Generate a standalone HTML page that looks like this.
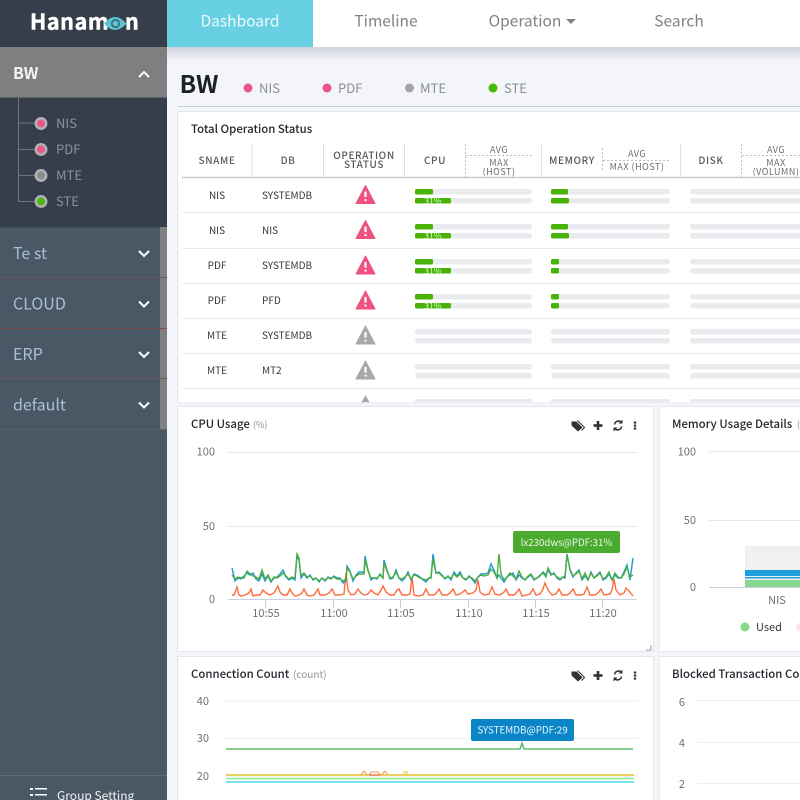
<!DOCTYPE html>
<html><head><meta charset="utf-8"><style>
html,body{margin:0;padding:0;width:800px;height:800px;overflow:hidden;background:#f3f5fa}
svg{display:block}
text{font-family:"Noto Sans CJK KR","Liberation Sans",sans-serif}
.n{font-size:15.500px;fill:#7d8287}
.leg{font-size:13px;fill:#8a8f95}
.sb{font-size:16px;fill:#a9c0d4}
.sub{font-size:13px;fill:#8d9298}
.h{font-size:10px;fill:#55595e;letter-spacing:.6px;text-anchor:middle;font-weight:500}
.hs{font-size:9px;fill:#6a6e73;letter-spacing:.5px;text-anchor:middle}
.c{font-size:10px;fill:#33373c;text-anchor:middle}
.l{font-size:10px;fill:#33373c}
.ct{font-size:11.400px;fill:#23282f;font-weight:500}
.u{font-size:9px;fill:#8f9398}
.ax{font-size:11px;fill:#6d6f72}
.m{text-anchor:middle}
.e{text-anchor:end}
</style></head><body>
<svg width="800" height="800" viewBox="0 0 800 800" xmlns="http://www.w3.org/2000/svg">
<defs>
<linearGradient id="sh" x1="0" y1="0" x2="0" y2="1"><stop offset="0" stop-color="#cfd3da"/><stop offset="1" stop-color="#f3f5fa"/></linearGradient>
<g id="w"><path d="M0-9.500 L9.500 8.500 H-9.500Z" stroke-width="1" stroke-linejoin="round"/><rect x="-1.600" y="-4" width="3.200" height="6.600" fill="#fff"/><rect x="-1.600" y="3.700" width="3.200" height="2.800" fill="#fff"/></g>
<g id="icons" fill="#333">
<path d="M-63.500-4 h5 l6 6 -4.500 4 -6.500-6Z"/><path d="M-57.500-5 l7 7 -3 3" fill="none" stroke="#333" stroke-width="1"/>
<rect x="-41.500" y="-1.300" width="9" height="2.600"/><rect x="-38.300" y="-4.500" width="2.600" height="9"/>
<path d="M-20.500-1 a4 4 0 0 1 7-2 M-13.500 1 a4 4 0 0 1-7 2" fill="none" stroke="#333" stroke-width="1.500"/><path d="M-12.500-6 v4 h-4Z M-21.500 6 v-4 h4Z"/>
<rect x="-1.200" y="-4" width="2.400" height="2.100"/><rect x="-1.200" y="-1" width="2.400" height="2.100"/><rect x="-1.200" y="2" width="2.400" height="2.100"/>
</g>
</defs>

<rect x="167" y="47" width="633" height="14" fill="url(#sh)"/>
<rect x="167" y="0" width="633" height="47" fill="#fff"/>
<rect x="167" y="0" width="146" height="47" fill="#67d0e3"/>
<text x="240" y="26.500" text-anchor="middle" style="font-size:15.500px;fill:#eef9fb">Dashboard</text>
<text x="386" y="26.500" text-anchor="middle" class="n">Timeline</text>
<text x="525" y="26.500" text-anchor="middle" class="n">Operation</text>
<path d="M566 19 h10 l-5 5Z" fill="#7d8287"/>
<text x="679" y="26.500" text-anchor="middle" class="n">Search</text>

<!-- sidebar -->
<rect x="0" y="0" width="167" height="800" fill="#4a5764"/>
<rect x="0" y="0" width="167" height="47" fill="#353e4a"/>
<text x="30" y="29.500" style="font-size:21.500px;font-weight:700;fill:#fff;stroke:#fff;stroke-width:.5px;letter-spacing:.6px">Hanam</text>
<path d="M104 23.500 Q115 10.500 126.500 23.500 Q115 36.500 104 23.500Z" fill="#5cc3d3"/>
<circle cx="115.500" cy="23.500" r="4.600" fill="#3f6f7e"/><circle cx="115.500" cy="23.500" r="2.800" fill="#5cc3d3"/>
<text x="125" y="29.500" style="font-size:21.500px;font-weight:700;fill:#fff;stroke:#fff;stroke-width:.5px">n</text>
<rect x="0" y="47" width="167" height="50.500" fill="#7f7f7f"/>
<text x="13" y="79" style="font-size:16px;font-weight:700;fill:#f4f4f4">BW</text>
<path d="M139 77 l5-5 5 5" fill="none" stroke="#fff" stroke-width="2"/>
<rect x="0" y="97.500" width="167" height="130" fill="#353e4a"/>
<path d="M18.500 97 V201.500 H35 M18.500 123 H35 M18.500 149.500 H35 M18.500 175.500 H35" fill="none" stroke="#6d7480"/>
<g stroke="#b0b3b6" stroke-width="2.500">
<circle cx="41" cy="123.500" r="5.200" fill="#f0558a"/>
<circle cx="41" cy="149.500" r="5.200" fill="#f0558a"/>
<circle cx="41" cy="175.500" r="5.200" fill="#8c8c8c"/>
<circle cx="41" cy="201.500" r="5.200" fill="#48bb0a"/>
</g>
<text x="56" y="128" class="sub">NIS</text>
<text x="56" y="154" class="sub">PDF</text>
<text x="56" y="180" class="sub">MTE</text>
<text x="56" y="206" class="sub">STE</text>
<rect x="160" y="227" width="7" height="203" fill="#808080"/>
<text x="13" y="259" class="sb">Te st</text>
<text x="13" y="309.500" class="sb">CLOUD</text>
<text x="13" y="360" class="sb">ERP</text>
<text x="13" y="410.500" class="sb">default</text>
<g fill="none" stroke="#fff" stroke-width="2">
<path d="M139 251 l5 5 5-5"/><path d="M139 301.500 l5 5 5-5"/><path d="M139 352 l5 5 5-5"/><path d="M139 402.500 l5 5 5-5"/>
</g>
<path d="M0 277.500 H167" stroke="#6a5560"/><path d="M0 328.500 H167" stroke="#7a4a55"/><path d="M0 378.500 H167" stroke="#6d5a58"/><path d="M0 429.500 H167" stroke="#5f6059"/>
<path d="M0 775.500 H167" stroke="#5f6b77"/>
<g fill="#fff"><rect x="30" y="788" width="3" height="2"/><rect x="35" y="788" width="12" height="1.500"/><rect x="30" y="794" width="3" height="2"/><rect x="35" y="794" width="12" height="1.500"/></g>
<text x="57" y="800" style="font-size:12px;fill:#f0f3f5">Group Setting</text>

<!-- title -->
<text x="179.500" y="93" style="font-size:24.500px;font-weight:700;fill:#1d2126">BW</text>
<circle cx="248" cy="88" r="4.500" fill="#f0558a"/><text x="259" y="93" class="leg">NIS</text>
<circle cx="327" cy="88" r="4.500" fill="#f0558a"/><text x="338" y="93" class="leg">PDF</text>
<circle cx="409.500" cy="88" r="4.500" fill="#a5a5a5"/><text x="420" y="93" class="leg">MTE</text>
<circle cx="493" cy="88" r="4.500" fill="#48bb0a"/><text x="504" y="93" class="leg">STE</text>
<path d="M178 106.500 H800" stroke="#c5cad3"/>

<!-- table panel -->
<rect x="177.500" y="111.500" width="630" height="291" fill="#fff" stroke="#e2e5ec"/>
<text x="191" y="133" class="ct">Total Operation Status</text>
<text x="217" y="164" class="h">SNAME</text>
<text x="288" y="164" class="h">DB</text>
<text x="364" y="159" class="h">OPERATION</text>
<text x="364" y="168" class="h">STATUS</text>
<text x="435" y="164" class="h">CPU</text>
<text x="499" y="153" class="hs">AVG</text>
<text x="499" y="166" class="hs">MAX</text>
<text x="499" y="175" class="hs">(HOST)</text>
<text x="572" y="164" class="h">MEMORY</text>
<text x="637" y="157" class="hs">AVG</text>
<text x="637" y="170" class="hs">MAX (HOST)</text>
<text x="711" y="164" class="h">DISK</text>
<text x="776" y="153" class="hs">AVG</text>
<text x="776" y="166" class="hs">MAX</text>
<text x="776" y="175" class="hs">(VOLUMN)</text>
<g stroke="#dfe1e4"><path d="M252 144 V177 M323.500 144 V177 M404.500 144 V177 M541.500 144 V177 M680.500 144 V177"/></g>
<g stroke="#b9bcc0" stroke-dasharray="2 2"><path d="M465.500 144 V177 M602.500 148 V172 M741.500 144 V177 M466 155.500 H533 M603 160.500 H671 M742 155.500 H800"/></g>
<path d="M182 177.500 H800" stroke="#c9cbce" stroke-width="1.500"/>
<g stroke="#e8eaee"><path d="M182 212.500 H800 M182 248.500 H800 M182 283.500 H800 M182 318.500 H800 M182 353.500 H800 M182 388.500 H800"/></g>

<text x="217" y="199" class="c">NIS</text><text x="262" y="199" class="l">SYSTEMDB</text>
<text x="217" y="234" class="c">NIS</text><text x="262" y="234" class="l">NIS</text>
<text x="217" y="269" class="c">PDF</text><text x="262" y="269" class="l">SYSTEMDB</text>
<text x="217" y="304" class="c">PDF</text><text x="262" y="304" class="l">PFD</text>
<text x="217" y="339" class="c">MTE</text><text x="262" y="339" class="l">SYSTEMDB</text>
<text x="217" y="374" class="c">MTE</text><text x="262" y="374" class="l">MT2</text>

<use href="#w" x="365.500" y="195" fill="#f0527f" stroke="#f0527f"/>
<use href="#w" x="365.500" y="230" fill="#f0527f" stroke="#f0527f"/>
<use href="#w" x="365.500" y="265.500" fill="#f0527f" stroke="#f0527f"/>
<use href="#w" x="365.500" y="300.500" fill="#f0527f" stroke="#f0527f"/>
<use href="#w" x="365.500" y="335.500" fill="#a7a8ab" stroke="#a7a8ab"/>
<use href="#w" x="365.500" y="370.500" fill="#a7a8ab" stroke="#a7a8ab"/>
<use href="#w" x="365.500" y="405.500" fill="#a7a8ab" stroke="#a7a8ab"/>

<!-- bars -->
<g fill="#e9ebee">
<rect x="415" y="189" width="117" height="5.500" rx="2.500"/><rect x="415" y="198" width="117" height="5.500" rx="2.500"/>
<rect x="551" y="189" width="119" height="5.500" rx="2.500"/><rect x="551" y="198" width="119" height="5.500" rx="2.500"/>
<rect x="690" y="189" width="130" height="5.500" rx="2.500"/><rect x="690" y="198" width="130" height="5.500" rx="2.500"/>
<rect x="415" y="224" width="117" height="5.500" rx="2.500"/><rect x="415" y="233" width="117" height="5.500" rx="2.500"/>
<rect x="551" y="224" width="119" height="5.500" rx="2.500"/><rect x="551" y="233" width="119" height="5.500" rx="2.500"/>
<rect x="690" y="224" width="130" height="5.500" rx="2.500"/><rect x="690" y="233" width="130" height="5.500" rx="2.500"/>
<rect x="415" y="259" width="117" height="5.500" rx="2.500"/><rect x="415" y="268" width="117" height="5.500" rx="2.500"/>
<rect x="551" y="259" width="119" height="5.500" rx="2.500"/><rect x="551" y="268" width="119" height="5.500" rx="2.500"/>
<rect x="690" y="259" width="130" height="5.500" rx="2.500"/><rect x="690" y="268" width="130" height="5.500" rx="2.500"/>
<rect x="415" y="294" width="117" height="5.500" rx="2.500"/><rect x="415" y="303" width="117" height="5.500" rx="2.500"/>
<rect x="551" y="294" width="119" height="5.500" rx="2.500"/><rect x="551" y="303" width="119" height="5.500" rx="2.500"/>
<rect x="690" y="294" width="130" height="5.500" rx="2.500"/><rect x="690" y="303" width="130" height="5.500" rx="2.500"/>
<rect x="415" y="329" width="117" height="5.500" rx="2.500"/><rect x="415" y="338" width="117" height="5.500" rx="2.500"/>
<rect x="551" y="329" width="119" height="5.500" rx="2.500"/><rect x="551" y="338" width="119" height="5.500" rx="2.500"/>
<rect x="690" y="329" width="130" height="5.500" rx="2.500"/><rect x="690" y="338" width="130" height="5.500" rx="2.500"/>
<rect x="415" y="364" width="117" height="5.500" rx="2.500"/><rect x="415" y="373" width="117" height="5.500" rx="2.500"/>
<rect x="551" y="364" width="119" height="5.500" rx="2.500"/><rect x="551" y="373" width="119" height="5.500" rx="2.500"/>
<rect x="690" y="364" width="130" height="5.500" rx="2.500"/><rect x="690" y="373" width="130" height="5.500" rx="2.500"/>
<rect x="415" y="399" width="117" height="3"/><rect x="551" y="399" width="119" height="3"/><rect x="690" y="399" width="130" height="3"/>
</g>
<g fill="#48b306">
<rect x="415" y="189" width="18" height="5.500" rx="1.500"/><rect x="415" y="198" width="36" height="5.500" rx="1.500"/>
<rect x="551" y="189" width="17" height="5.500" rx="1.500"/><rect x="551" y="198" width="18" height="5.500" rx="1.500"/>
<rect x="415" y="224" width="18" height="5.500" rx="1.500"/><rect x="415" y="233" width="36" height="5.500" rx="1.500"/>
<rect x="551" y="224" width="17" height="5.500" rx="1.500"/><rect x="551" y="233" width="18" height="5.500" rx="1.500"/>
<rect x="415" y="259" width="18" height="5.500" rx="1.500"/><rect x="415" y="268" width="36" height="5.500" rx="1.500"/>
<rect x="551" y="259" width="8" height="5.500" rx="1.500"/><rect x="551" y="268" width="8" height="5.500" rx="1.500"/>
<rect x="415" y="294" width="18" height="5.500" rx="1.500"/><rect x="415" y="303" width="36" height="5.500" rx="1.500"/>
<rect x="551" y="294" width="8" height="5.500" rx="1.500"/><rect x="551" y="303" width="8" height="5.500" rx="1.500"/>
</g>
<g fill="#d8f5c8" text-anchor="middle">
<text x="433" y="204" style="font-size:8.500px">31%</text><text x="433" y="239" style="font-size:8.500px">31%</text><text x="433" y="274" style="font-size:8.500px">31%</text><text x="433" y="309" style="font-size:8.500px">31%</text>
</g>

<!-- main bg gap cover -->
<rect x="167" y="402.500" width="633" height="3.500" fill="#f3f5fa"/>

<!-- CPU card -->
<rect x="177.500" y="406.500" width="476" height="245" fill="#fff" stroke="#e2e5ec"/>
<text x="191" y="428" class="ct">CPU Usage</text><text x="253" y="428" class="u">(%)</text>
<use href="#icons" x="635" y="425.500"/>
<g stroke="#e6e8ec"><path d="M228 452.500 H638 M228 526.500 H638"/></g>
<path d="M228 599.500 H637" stroke="#c8d1e0"/>
<g stroke="#c8d1e0"><path d="M265.500 600 V608 M333.500 600 V608 M400.500 600 V608 M468.500 600 V608 M535.500 600 V608 M602.500 600 V608"/></g>
<text x="215" y="455.500" class="ax e">100</text><text x="215" y="530" class="ax e">50</text><text x="215" y="603" class="ax e">0</text>
<text x="266" y="617" class="ax m">10:55</text><text x="334" y="617" class="ax m">11:00</text><text x="401" y="617" class="ax m">11:05</text><text x="469" y="617" class="ax m">11:10</text><text x="536" y="617" class="ax m">11:15</text><text x="603" y="617" class="ax m">11:20</text>
<polyline fill="none" stroke="#ff6b3d" stroke-width="1.400" points="232,595 234,595 236,590 237,587 239,595 241,596 245,595 249,593 251,589 253,596 256,595 260,595 263,590 266,593 270,595 274,593 278,586 280,592 283,595 287,595 290,589 292,593 295,596 299,595 302,593 304,589 307,595 310,596 314,595 318,589 320,595 325,595 329,593 332,589 335,595 340,595 344,594 346,573 348,590 351,595 355,594 358,589 361,593 364,595 368,594 371,590 374,593 378,595 381,590 383,586 386,592 390,595 394,595 397,590 399,589 402,595 407,595 410,594 412,577 414,595 418,596 423,595 426,589 429,595 434,595 437,592 439,589 442,595 447,595 450,593 453,589 456,595 460,594 463,592 465,590 468,594 473,593 476,590 478,580 480,592 484,595 489,594 492,587 495,594 500,595 504,592 506,589 509,595 514,595 517,592 519,589 522,596 526,595 530,594 533,589 536,595 540,594 543,589 545,583 548,590 552,595 556,594 559,589 562,595 567,595 570,593 573,589 576,595 581,595 584,594 587,587 590,595 595,595 598,593 601,589 604,595 610,594 612,590 614,579 616,590 620,595 624,593 626,588 629,591 633,596"/>
<polyline fill="none" stroke="#1f97d8" stroke-width="1.400" points="232,568 235,581 238,578 241,579 244,576 247,573 250,575 253,573 256,579 259,581 262,574 265,581 268,576 271,582 274,578 277,577 280,574 283,570 286,577 289,580 292,578 295,580 297,556 299,560 301,578 304,574 307,578 310,575 313,580 316,578 319,582 322,578 325,581 328,577 331,579 334,576 337,578 340,578 343,583 346,581 347,566 350,571 353,581 356,575 359,572 362,572 364,573 365,556 368,570 371,580 374,578 377,579 380,574 383,578 384,560 387,570 390,579 393,578 396,570 399,578 402,581 405,578 408,572 411,580 414,574 417,575 420,577 423,580 426,582 429,578 431,578 433,554 436,573 439,572 442,575 445,579 448,576 451,580 454,572 457,576 460,572 463,578 466,580 469,576 472,579 475,583 478,577 481,574 484,574 488,573 491,564 494,570 497,578 499,575 501,578 504,582 507,577 510,575 513,573 516,580 519,575 522,578 525,580 528,577 531,575 534,580 537,578 540,576 543,572 546,575 548,570 551,575 554,573 557,578 560,580 563,577 565,578 567,554 570,570 573,577 576,573 579,570 582,580 585,576 588,580 591,572 594,578 597,575 600,572 603,580 606,578 609,574 612,580 615,575 618,578 621,578 624,572 627,565 630,580 633,558"/>
<polyline fill="none" stroke="#4bad3a" stroke-width="1.400" points="232,575 235,579 238,577 241,578 244,578 247,571 250,574 253,576 256,577 259,579 262,570 265,579 268,575 271,581 274,577 277,578 280,576 283,573 286,576 289,579 292,577 295,578 297,554 299,558 301,576 304,573 307,577 310,576 313,579 316,578 319,581 322,578 325,580 328,578 331,578 334,577 337,579 340,579 343,581 346,579 347,568 350,572 353,579 356,576 359,574 362,574 364,574 365,559 368,571 371,578 374,578 377,578 380,575 383,578 384,563 387,571 390,578 393,577 396,572 399,578 402,579 405,577 408,574 411,579 414,575 417,576 420,578 423,579 426,580 429,578 431,577 433,559 436,573 439,573 442,576 445,578 448,577 451,578 454,574 457,577 460,574 463,578 466,579 469,577 472,578 475,581 478,577 481,575 484,576 488,575 491,569 494,572 497,578 499,554 501,574 504,580 507,577 510,573 513,576 516,579 519,571 522,577 525,580 528,576 531,574 534,579 537,578 540,575 543,573 546,577 548,568 551,574 554,574 557,577 560,579 563,577 565,576 567,555 570,569 573,576 576,574 579,571 582,579 585,573 588,580 591,573 594,578 597,576 600,573 603,579 606,577 609,572 612,580 615,573 618,577 621,578 624,574 627,567 630,577 633,575"/>
<rect x="513" y="531" width="107" height="22" rx="2" fill="#4bab2f"/>
<text x="566.500" y="546" text-anchor="middle" style="font-size:9.700px;fill:#eef8ea">lx230dws@PDF:31%</text>
<path d="M651 645 V650 H646" fill="none" stroke="#9a9ea4"/>

<!-- Memory card -->
<rect x="659" y="406.500" width="150" height="245" fill="#fff" stroke="#e2e5ec"/>
<text x="672" y="428" class="ct">Memory Usage Details</text><text x="797" y="428" class="u">(</text>
<g stroke="#e6e8ec"><path d="M709 451.500 H800 M709 520.500 H800"/></g>
<path d="M709 587.500 H800" stroke="#c8d1e0"/>
<text x="696" y="455.500" class="ax e">100</text><text x="696" y="524" class="ax e">50</text><text x="696" y="591" class="ax e">0</text>
<rect x="745" y="546" width="55" height="41" fill="#f0f0f0"/>
<rect x="745" y="570" width="55" height="6" fill="#1f9fdc"/>
<rect x="745" y="577" width="55" height="1.500" fill="#1f9fdc"/>
<rect x="745" y="580" width="55" height="7" fill="#86d98c"/>
<text x="777" y="604" class="ax m">NIS</text>
<circle cx="745" cy="627" r="4.500" fill="#85d987"/>
<text x="756" y="631" style="font-size:11px;fill:#33373c">Used</text>
<circle cx="800" cy="627" r="4" fill="#fbe3e6"/>

<!-- Connection card -->
<rect x="177.500" y="656.500" width="476" height="160" fill="#fff" stroke="#e2e5ec"/>
<text x="191" y="678" class="ct">Connection Count</text><text x="293" y="678" style="font-size:10px;fill:#8f9398">(count)</text>
<use href="#icons" x="635" y="675.500"/>
<g stroke="#eceef1"><path d="M222 701 H638 M222 738.500 H638"/></g>
<g stroke="#eceef1"><path d="M222 776 H638"/></g>
<text x="209" y="705" class="ax e">40</text><text x="209" y="742" class="ax e">30</text><text x="209" y="780" class="ax e">20</text>
<polyline fill="none" stroke="#45ad52" stroke-width="1.300" points="226,749 520,749 522,743 524,749 633,749"/>
<path d="M226 775 H634" stroke="#e8c52c" stroke-width="1.500"/>
<path d="M226 778.500 H634" stroke="#90ed90" stroke-width="1.500"/>
<path d="M226 782 H634" stroke="#48dcef" stroke-width="1.500"/>
<path d="M361 775 L364 771 L367 775 M369 775 L371 772 H378 L380 775 M381 775 L385 771 L388 775" fill="none" stroke="#f28d62"/>
<path d="M369 775 H380" stroke="#ec5a5a"/>
<path d="M404 775 V772 H407 V775" fill="none" stroke="#e8c52c"/>
<rect x="471" y="719" width="103" height="22" rx="2" fill="#0a86c8"/>
<text x="522.500" y="733.500" text-anchor="middle" style="font-size:9.800px;fill:#eaf5fb">SYSTEMDB@PDF:29</text>

<!-- Blocked card -->
<rect x="659" y="656.500" width="150" height="160" fill="#fff" stroke="#e2e5ec"/>
<text x="672" y="678" class="ct">Blocked Transaction Co</text>
<g stroke="#eceef1"><path d="M697 700.500 H800 M697 742.500 H800 M697 783.500 H800"/></g>
<text x="685" y="706" class="ax e">6</text><text x="685" y="747" class="ax e">4</text><text x="685" y="788" class="ax e">2</text>
</svg>
</body></html>
